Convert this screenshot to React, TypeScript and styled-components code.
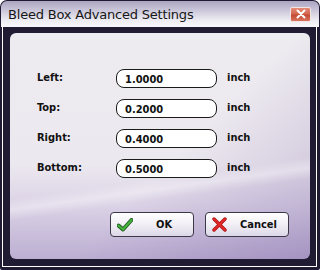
import { Fragment } from "react"
import styled, { createGlobalStyle } from "styled-components"

const GlobalStyle = createGlobalStyle`
    html, body {
        margin: 0;
        padding: 0;
        background: #ffffff;
    }
`

const Window = styled.div`
    width: 320px;
    height: 270px;
    box-sizing: border-box;
    background: #211a33;
    border-radius: 7px 7px 2px 2px;
    display: flex;
    flex-direction: column;
    font-family: "DejaVu Sans Condensed", "DejaVu Sans", sans-serif;
`
const TitleBar = styled.div`
    height: 26px;
    margin: 1px 1px 0 1px;
    border-radius: 6px 6px 0 0;
    background: linear-gradient(to bottom, #aba5c2 0%, #cac6d9 35%, #eeedf3 75%, #f8f8fa 100%);
    display: flex;
    align-items: center;
    justify-content: space-between;
    padding: 0 8px 0 7px;
`
const Title = styled.span`
    font-family: "DejaVu Sans", sans-serif;
    font-size: 13px;
    letter-spacing: -0.2px;
    color: #161616;
`
const CloseButton = styled.div`
    width: 21px;
    height: 15px;
    box-sizing: border-box;
    border: 1px solid #f2e4e4;
    border-radius: 2px;
    background: linear-gradient(to bottom, #e68c78 0%, #d4664e 45%, #c44a32 55%, #d9745e 100%);
    display: flex;
    align-items: center;
    justify-content: center;
`
const Frame = styled.div`
    flex: 1;
    margin: 0 3px 3px 2px;
    border: 1px solid #ffffff;
    border-top: none;
    padding: 6px 6px 7px 7px;
    display: flex;
`
const Panel = styled.div`
    flex: 1;
    border-radius: 6px;
    padding: 36px 21px 0 27px;
    background:
        linear-gradient(172deg, transparent 62%, rgba(255, 255, 255, 0.35) 66%, transparent 70%),
        linear-gradient(135deg, transparent 55%, rgba(110, 85, 155, 0.3) 100%),
        linear-gradient(to bottom, #eeebf0 0%, #ece8ef 58%, #dbd3e6 76%, #bcaed2 100%);
    display: flex;
    flex-direction: column;
`
const Fields = styled.div`
    display: grid;
    grid-template-columns: 69px 101px auto;
    column-gap: 10px;
    row-gap: 11px;
    align-items: center;
`
const Label = styled.span`
    font-size: 11px;
    font-weight: bold;
    color: #111;
    margin-bottom: 3px;
`
const ValueInput = styled.input`
    width: 101px;
    height: 19px;
    box-sizing: border-box;
    border: 1px solid #1a1a1a;
    border-radius: 8px;
    background: #ffffff;
    padding: 2px 0 0 8px;
    font-family: "DejaVu Sans Condensed", "DejaVu Sans", sans-serif;
    font-size: 11px;
    font-weight: bold;
    color: #111;
    outline: none;
`
const Buttons = styled.div`
    margin-top: 34px;
    display: flex;
    justify-content: flex-end;
    gap: 11px;
`
const Button = styled.button<{ $gap: number }>`
    width: 84px;
    height: 25px;
    box-sizing: border-box;
    border: 1px solid #3c3848;
    border-radius: 4px;
    background: linear-gradient(to bottom, #ffffff 0%, #f1eff5 50%, #dcd7e8 100%);
    display: flex;
    align-items: center;
    padding: 0 0 0 6px;
    gap: ${props => props.$gap}px;
    font-family: "DejaVu Sans Condensed", "DejaVu Sans", sans-serif;
    font-size: 11px;
    font-weight: bold;
    color: #111;
`

const CheckIcon = () => (
    <svg width="16" height="14" viewBox="0 0 16 14">
        <path d="M1.5 7.5 L6 11.5 L14.5 2" fill="none" stroke="#1e5c1e" strokeWidth="4" strokeLinecap="round" strokeLinejoin="round" />
        <path d="M1.5 7.5 L6 11.5 L14.5 2" fill="none" stroke="#48b040" strokeWidth="2.2" strokeLinecap="round" strokeLinejoin="round" />
    </svg>
)

const CrossIcon = () => (
    <svg width="15" height="15" viewBox="0 0 15 15">
        <path d="M2 2 L13 13 M13 2 L2 13" fill="none" stroke="#b01010" strokeWidth="3.4" strokeLinecap="round" />
        <path d="M2 2 L13 13 M13 2 L2 13" fill="none" stroke="#e02a2a" strokeWidth="1.8" strokeLinecap="round" />
    </svg>
)

const CloseIcon = () => (
    <svg width="10" height="10" viewBox="0 0 10 10">
        <path d="M1.5 1.5 L8.5 8.5 M8.5 1.5 L1.5 8.5" stroke="#ffffff" strokeWidth="2" strokeLinecap="round" />
    </svg>
)

const fields = [
    { label: "Left:", value: "1.0000" },
    { label: "Top:", value: "0.2000" },
    { label: "Right:", value: "0.4000" },
    { label: "Bottom:", value: "0.5000" },
]

const App = () => {
    return (
        <>
            <GlobalStyle />
            <Window>
                <TitleBar>
                    <Title>Bleed Box Advanced Settings</Title>
                    <CloseButton><CloseIcon /></CloseButton>
                </TitleBar>
                <Frame>
                    <Panel>
                        <Fields>
                            {fields.map(f => (
                                <Fragment key={f.label}>
                                    <Label>{f.label}</Label>
                                    <ValueInput defaultValue={f.value} readOnly />
                                    <Label>inch</Label>
                                </Fragment>
                            ))}
                        </Fields>
                        <Buttons>
                            <Button $gap={23}><CheckIcon />OK</Button>
                            <Button $gap={13}><CrossIcon />Cancel</Button>
                        </Buttons>
                    </Panel>
                </Frame>
            </Window>
        </>
    )
}

export default App
